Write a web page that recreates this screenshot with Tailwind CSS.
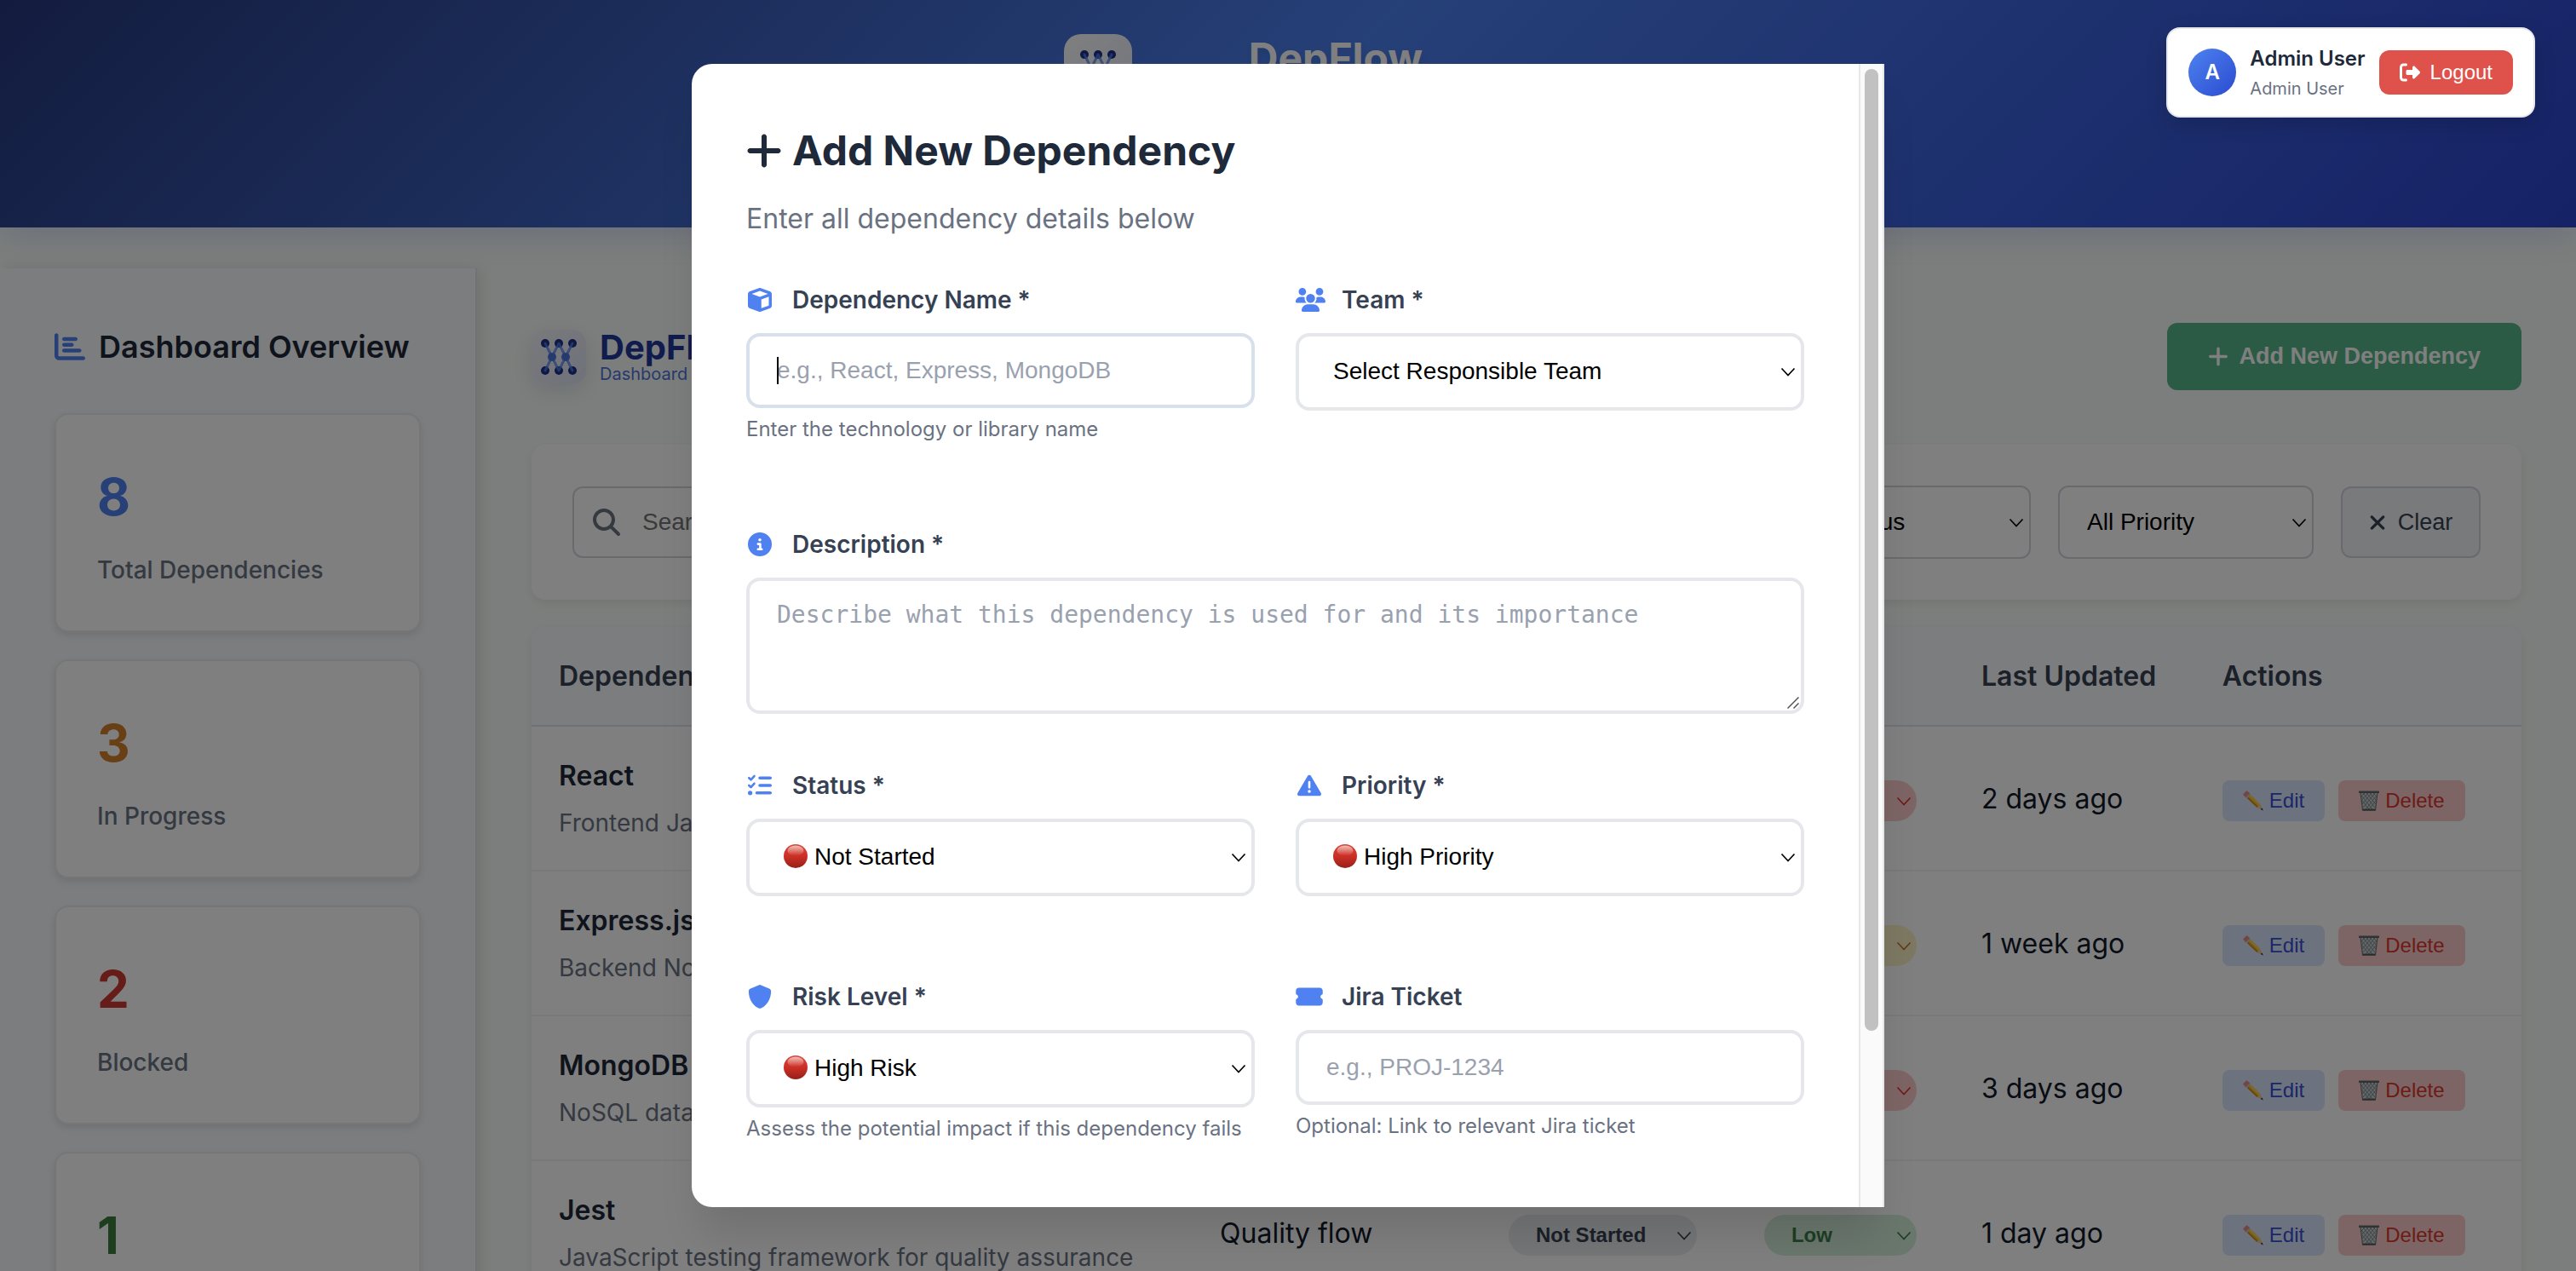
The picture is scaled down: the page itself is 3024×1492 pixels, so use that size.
<!DOCTYPE html>
<html lang="en">
<head>
<meta charset="utf-8">
<meta name="viewport" content="width=device-width, initial-scale=1">
<title>DepFlow – Add New Dependency</title>
<script src="https://cdn.jsdelivr.net/npm/@tailwindcss/browser@4"></script>
</head>
<body class="font-[Inter,sans-serif] text-[32px] leading-[51px] text-gray-900">

<!-- Shared icons -->
<svg class="absolute size-0" aria-hidden="true">
  <defs>
    <linearGradient id="ball" x1="0" y1="0" x2="0" y2="1"><stop offset="0" stop-color="#d9483c"/><stop offset=".5" stop-color="#cc2f25"/><stop offset="1" stop-color="#962019"/></linearGradient>
    <linearGradient id="shine" x1="0" y1="0" x2="0" y2="1"><stop offset="0" stop-color="#fff" stop-opacity=".65"/><stop offset="1" stop-color="#fff" stop-opacity="0"/></linearGradient>
  </defs>
  <symbol id="i-plus" viewBox="0 0 448 512"><path d="M256 80c0-17.7-14.3-32-32-32s-32 14.3-32 32V224H48c-17.7 0-32 14.3-32 32s14.3 32 32 32H192V432c0 17.7 14.3 32 32 32s32-14.3 32-32V288H400c17.7 0 32-14.3 32-32s-14.3-32-32-32H256V80z"/></symbol>
  <symbol id="i-cube" viewBox="0 0 512 512"><path d="M234.5 5.7c13.9-5 29.1-5 43.1 0l192 68.6C495 83.4 512 107.5 512 134.6V377.4c0 27-17 51.2-42.5 60.3l-192 68.6c-13.9 5-29.1 5-43.1 0l-192-68.6C17 428.6 0 404.5 0 377.4V134.6c0-27 17-51.2 42.5-60.3l192-68.6zM256 66L82.3 128 256 190l173.7-62L256 66zm32 368.6l160-57.1v-188L288 246.6v188z"/></symbol>
  <symbol id="i-users" viewBox="0 0 640 512"><path d="M144 0a80 80 0 1 1 0 160A80 80 0 1 1 144 0zM512 0a80 80 0 1 1 0 160A80 80 0 1 1 512 0zM0 298.7C0 239.8 47.8 192 106.7 192h42.7c15.9 0 31 3.5 44.6 9.7c-1.3 7.2-1.9 14.7-1.9 22.3c0 38.2 16.8 72.5 43.3 96c-.2 0-.4 0-.7 0H21.3C9.6 320 0 310.4 0 298.7zM405.3 320c-.2 0-.4 0-.7 0c26.6-23.5 43.3-57.8 43.3-96c0-7.6-.7-15-1.9-22.3c13.6-6.3 28.7-9.7 44.6-9.7h42.7C592.2 192 640 239.8 640 298.7c0 11.8-9.6 21.3-21.3 21.3H405.3zM224 224a96 96 0 1 1 192 0 96 96 0 1 1 -192 0zM128 485.3C128 411.7 187.7 352 261.3 352H378.7C452.3 352 512 411.7 512 485.3c0 14.7-11.9 26.7-26.7 26.7H154.7c-14.7 0-26.7-11.9-26.7-26.7z"/></symbol>
  <symbol id="i-info" viewBox="0 0 512 512"><path d="M256 512A256 256 0 1 0 256 0a256 256 0 1 0 0 512zM216 336h24V272H216c-13.3 0-24-10.7-24-24s10.7-24 24-24h48c13.3 0 24 10.7 24 24v88h8c13.3 0 24 10.7 24 24s-10.7 24-24 24H216c-13.3 0-24-10.7-24-24s10.7-24 24-24zm40-208a32 32 0 1 1 0 64 32 32 0 1 1 0-64z"/></symbol>
  <symbol id="i-tasks" viewBox="0 0 512 512"><path d="M152.1 38.2c9.9 8.9 10.7 24 1.8 33.9l-72 80c-4.4 4.9-10.6 7.8-17.2 7.9s-12.9-2.4-17.6-7L7 113C-2.3 103.6-2.3 88.4 7 79s24.6-9.4 33.9 0l22.1 22.1 55.1-61.2c8.9-9.9 24-10.7 33.9-1.8zm0 160c9.9 8.9 10.7 24 1.8 33.9l-72 80c-4.4 4.9-10.6 7.8-17.2 7.9s-12.9-2.4-17.6-7L7 273c-9.4-9.4-9.4-24.6 0-33.9s24.6-9.4 33.9 0l22.1 22.1 55.1-61.2c8.9-9.9 24-10.7 33.9-1.8zM224 96c0-17.7 14.3-32 32-32H480c17.7 0 32 14.3 32 32s-14.3 32-32 32H256c-17.7 0-32-14.3-32-32zm0 160c0-17.7 14.3-32 32-32H480c17.7 0 32 14.3 32 32s-14.3 32-32 32H256c-17.7 0-32-14.3-32-32zM160 416c0-17.7 14.3-32 32-32H480c17.7 0 32 14.3 32 32s-14.3 32-32 32H192c-17.7 0-32-14.3-32-32zM48 368a48 48 0 1 1 0 96 48 48 0 1 1 0-96z"/></symbol>
  <symbol id="i-warn" viewBox="0 0 512 512"><path d="M256 32c14.2 0 27.3 7.5 34.5 19.8l216 368c7.3 12.4 7.3 27.7 .2 40.1S486.3 480 472 480H40c-14.3 0-27.6-7.7-34.7-20.1s-7-27.8 .2-40.1l216-368C228.7 39.5 241.8 32 256 32zm0 128c-13.3 0-24 10.7-24 24V296c0 13.3 10.7 24 24 24s24-10.7 24-24V184c0-13.3-10.7-24-24-24zm32 224a32 32 0 1 0 -64 0 32 32 0 1 0 64 0z"/></symbol>
  <symbol id="i-shield" viewBox="0 0 512 512"><path d="M256 0c4.6 0 9.2 1 13.4 2.9L457.7 82.8c22 9.3 38.4 31 38.3 57.2c-.5 99.2-41.3 280.7-213.6 363.2c-16.7 8-36.1 8-52.8 0C57.3 420.7 16.5 239.2 16 140c-.1-26.2 16.3-47.9 38.3-57.2L242.7 2.9C246.8 1 251.4 0 256 0z"/></symbol>
  <symbol id="i-ticket" viewBox="0 0 576 512"><path d="M0 128C0 92.7 28.7 64 64 64H512c35.3 0 64 28.7 64 64v64c0 8.8-7.4 15.7-15.7 18.6C541.5 217.1 528 235 528 256s13.5 38.9 32.3 45.4c8.3 2.9 15.7 9.8 15.7 18.6v64c0 35.3-28.7 64-64 64H64c-35.3 0-64-28.7-64-64V320c0-8.8 7.4-15.7 15.7-18.6C34.5 294.9 48 277 48 256s-13.5-38.9-32.3-45.4C7.4 207.7 0 200.8 0 192V128z"/></symbol>
  <symbol id="i-chart" viewBox="0 0 512 512"><path d="M32 32c17.7 0 32 14.3 32 32V400c0 8.8 7.2 16 16 16H480c17.7 0 32 14.3 32 32s-14.3 32-32 32H80c-44.2 0-80-35.8-80-80V64C0 46.3 14.3 32 32 32zm96 96c0-17.7 14.3-32 32-32l192 0c17.7 0 32 14.3 32 32s-14.3 32-32 32H160c-17.7 0-32-14.3-32-32zm32 64H288c17.7 0 32 14.3 32 32s-14.3 32-32 32H160c-17.7 0-32-14.3-32-32s14.3-32 32-32zm0 96H416c17.7 0 32 14.3 32 32s-14.3 32-32 32H160c-17.7 0-32-14.3-32-32s14.3-32 32-32z"/></symbol>
  <symbol id="i-search" viewBox="0 0 512 512"><path d="M416 208c0 45.9-14.9 88.3-40 122.7L502.6 457.4c12.5 12.5 12.5 32.8 0 45.3s-32.8 12.5-45.3 0L330.7 376c-34.4 25.2-76.8 40-122.7 40C93.1 416 0 322.9 0 208S93.1 0 208 0S416 93.1 416 208zM208 352a144 144 0 1 0 0-288 144 144 0 1 0 0 288z"/></symbol>
  <symbol id="i-logout" viewBox="0 0 512 512"><path d="M377.9 105.9L500.7 228.7c7.2 7.2 11.3 17.1 11.3 27.3s-4.1 20.1-11.3 27.3L377.9 406.1c-6.4 6.4-15 9.9-24 9.9c-18.7 0-33.9-15.2-33.9-33.9l0-62.1-128 0c-17.7 0-32-14.3-32-32l0-64c0-17.7 14.3-32 32-32l128 0 0-62.1c0-18.7 15.2-33.9 33.9-33.9c9 0 17.6 3.6 24 9.9zM160 96L96 96c-17.7 0-32 14.3-32 32l0 256c0 17.7 14.3 32 32 32l64 0c17.7 0 32 14.3 32 32s-14.3 32-32 32l-64 0c-53 0-96-43-96-96L0 128C0 75 43 32 96 32l64 0c17.7 0 32 14.3 32 32s-14.3 32-32 32z"/></symbol>
  <symbol id="i-x" viewBox="0 0 384 512"><path d="M342.6 150.6c12.5-12.5 12.5-32.8 0-45.3s-32.8-12.5-45.3 0L192 210.7 86.6 105.4c-12.5-12.5-32.8-12.5-45.3 0s-12.5 32.8 0 45.3L146.7 256 41.4 361.4c-12.5 12.5-12.5 32.8 0 45.3s32.8 12.5 45.3 0L192 301.3 297.4 406.6c12.5 12.5 32.8 12.5 45.3 0s12.5-32.8 0-45.3L237.3 256 342.6 150.6z"/></symbol>
  <symbol id="i-chevron" viewBox="0 0 18 12"><path d="M1.5 1.5 9 9.5 16.5 1.5" fill="none" stroke="currentColor" stroke-width="1.7"/></symbol>
  <symbol id="i-ball" viewBox="0 0 28 28"><circle cx="14" cy="14" r="14" fill="url(#ball)"/><ellipse cx="14" cy="7.5" rx="9.5" ry="6" fill="url(#shine)"/></symbol>
  <symbol id="i-pencil" viewBox="0 0 24 24">
    <path d="M1 4.5 4.5 1 7.5 3.5 3.5 7.5Z" fill="#e98a86" stroke="#e98a86" stroke-width="1.5" stroke-linejoin="round"/>
    <path d="M3.5 7.5 7.5 3.5 9 5 5 9Z" fill="#b9c6cf"/>
    <path d="M5 9 9 5 20.5 16 16.5 20Z" fill="#f0b429"/><path d="M7.3 6.7 9 5 20.5 16 18.8 17.7Z" fill="#fbd35c"/><path d="M5 9 6 8 17.5 19 16.5 20Z" fill="#c98712"/>
    <path d="M16.5 20 20.5 16 23.5 23.2Z" fill="#ecc79c"/><path d="M20.8 21.9 22.4 20.5 23.8 23.6Z" fill="#222"/>
  </symbol>
  <symbol id="i-bin" viewBox="0 0 24 24">
    <path d="M2 2 4.5 23H19.5L22 2Z" fill="#c9ced0"/>
    <path d="M5 3 19 20M9 3 20 16M13 3 21 12M17 3 21 7M3 6 16 22M4 12 12 22M19 3 5 20M15 3 4 16M11 3 3 12M7 3 3 7M21 6 8 22M20 12 12 22" stroke="#7b8386" stroke-width=".9" fill="none"/>
    <path d="M2 2 4.5 23H19.5L22 2Z" fill="none" stroke="#6f777a" stroke-width="1.2"/>
    <path d="M.8 1.8H23.2" stroke="#5f676a" stroke-width="2.4" stroke-linecap="round"/><path d="M4.5 22.6H19.5" stroke="#50585b" stroke-width="2"/>
  </symbol>
  <symbol id="i-graph" viewBox="0 0 64 64">
    <g fill="#1f2f86"><circle cx="16" cy="16" r="5"/><circle cx="32" cy="16" r="5"/><circle cx="48" cy="16" r="5"/><circle cx="16" cy="48" r="5"/><circle cx="32" cy="48" r="5"/><circle cx="48" cy="48" r="5"/></g>
    <path d="M16 16 24 32 32 16 40 32 48 16M16 48 24 32 32 48 40 32 48 48" fill="none" stroke="#4f82f0" stroke-opacity=".75" stroke-width="3" stroke-linecap="round" stroke-linejoin="round"/>
    <g fill="#4a76dc"><circle cx="24" cy="32" r="5"/><circle cx="40" cy="32" r="5"/></g>
  </symbol>
</svg>

<div class="relative h-screen overflow-hidden bg-[#f9fdfa]">

  <header class="h-[267px] bg-[linear-gradient(135deg,#27387e,#4c80f0_50%,#2c44cc)] pt-10 shadow-[0_8px_40px_rgba(59,90,220,0.2)]">
    <div class="flex items-start justify-center gap-8">
      <div class="grid size-20 place-items-center rounded-[20px] bg-[linear-gradient(135deg,#ffffff,#e6ecfc)]"><svg class="size-16"><use href="#i-graph"/></svg></div>
      <div class="w-[414px] text-center">
        <h1 class="text-5xl leading-[56px] font-bold text-white [text-shadow:0_4px_8px_rgba(0,0,0,0.1)]">DepFlow</h1>
      </div>
    </div>
  </header>

  <div class="mt-12 flex items-stretch">
    <aside class="w-[560px] shrink-0 border-r-2 border-[#e2e5ea] bg-[#f8fafc] px-16 pt-16 pb-16 shadow-[4px_0_16px_rgba(0,0,0,0.1)]">
      <h2 class="mb-[50px] flex h-14 items-center gap-4 text-4xl font-semibold whitespace-nowrap text-gray-800"><svg class="size-9 shrink-0 fill-[#4f82f0]"><use href="#i-chart"/></svg>Dashboard Overview</h2>
      <div class="flex flex-col gap-8">
        <div class="rounded-2xl border-2 border-[#ececec] bg-white p-12 shadow-[0_4px_8px_rgba(0,0,0,0.1)]">
          <div class="mb-4 text-6xl leading-24 font-bold text-[#4f82f0]">8</div>
          <div class="text-[28px] leading-[45px] font-medium text-gray-500">Total Dependencies</div>
        </div>
        <div class="rounded-2xl border-2 border-[#ececec] bg-white p-12 shadow-[0_4px_8px_rgba(0,0,0,0.1)]">
          <div class="mb-4 text-6xl leading-24 font-bold text-[#d37e2d]">3</div>
          <div class="text-[28px] leading-[45px] font-medium text-gray-500">In Progress</div>
        </div>
        <div class="rounded-2xl border-2 border-[#ececec] bg-white p-12 shadow-[0_4px_8px_rgba(0,0,0,0.1)]">
          <div class="mb-4 text-6xl leading-24 font-bold text-[#cc3832]">2</div>
          <div class="text-[28px] leading-[45px] font-medium text-gray-500">Blocked</div>
        </div>
        <div class="rounded-2xl border-2 border-[#ececec] bg-white p-12 shadow-[0_4px_8px_rgba(0,0,0,0.1)]">
          <div class="mb-4 text-6xl leading-24 font-bold text-[#3c7d40]">1</div>
          <div class="text-[28px] leading-[45px] font-medium text-gray-500">Completed</div>
        </div>
      </div>
    </aside>

    <main class="min-w-0 flex-1 p-16">
      <div class="mb-16 flex items-center justify-between">
        <div class="flex items-center gap-4">
          <div class="size-16 rounded-2xl bg-[linear-gradient(135deg,#f3f4f8,#dfe4f6)] shadow-[0_8px_24px_rgba(70,80,130,0.15)]"><svg class="size-16"><use href="#i-graph"/></svg></div>
          <div>
            <div class="text-[40px] leading-10 font-bold text-[#22389c]">DepFlow</div>
            <div class="text-xl leading-[22px] text-[#4f74d8]">Dashboard</div>
          </div>
        </div>
        <button class="flex h-[79px] items-center gap-3 rounded-xl bg-[#56b688] px-12 font-['Liberation_Sans',Arial,sans-serif] text-[27px] font-bold text-white"><svg class="h-[27px] w-6 fill-current"><use href="#i-plus"/></svg>Add New Dependency</button>
      </div>

      <div class="mb-8 flex items-center gap-8 rounded-2xl bg-white p-12 font-['Liberation_Sans',Arial,sans-serif] text-[28px] leading-8 shadow-[0_4px_12px_rgba(0,0,0,0.08)]">
        <div class="relative flex-1">
          <svg class="absolute top-[26px] left-6 size-8 fill-[#6b7280]"><use href="#i-search"/></svg>
          <input type="search" aria-label="Search dependencies" placeholder="Search dependencies..." class="h-[84px] w-full rounded-xl border-2 border-gray-300 bg-white pr-6 pl-20 placeholder:text-[#757575]">
        </div>
        <div class="relative w-[300px]">
          <select aria-label="Team filter" class="h-[86px] w-full appearance-none rounded-xl border-2 border-gray-300 bg-white pl-8 text-black"><option>All Teams</option></select>
          <svg class="pointer-events-none absolute top-[38px] right-2 h-3 w-[18px] text-black"><use href="#i-chevron"/></svg>
        </div>
        <div class="relative w-[300px]">
          <select aria-label="Status filter" class="h-[86px] w-full appearance-none rounded-xl border-2 border-gray-300 bg-white pl-8 text-black"><option>All Status</option></select>
          <svg class="pointer-events-none absolute top-[38px] right-2 h-3 w-[18px] text-black"><use href="#i-chevron"/></svg>
        </div>
        <div class="relative w-[300px]">
          <select aria-label="Priority filter" class="h-[86px] w-full appearance-none rounded-xl border-2 border-gray-300 bg-white pl-8 text-black"><option>All Priority</option></select>
          <svg class="pointer-events-none absolute top-[38px] right-2 h-3 w-[18px] text-black"><use href="#i-chevron"/></svg>
        </div>
        <button class="flex h-[84px] w-[164px] items-center justify-center gap-3.5 rounded-xl border-2 border-gray-300 bg-gray-100 text-[27px] text-gray-700"><svg class="h-[27px] w-5 fill-current"><use href="#i-x"/></svg>Clear</button>
      </div>

      <div class="overflow-hidden rounded-2xl bg-white shadow-[0_4px_12px_rgba(0,0,0,0.08)]">
        <table class="w-full table-fixed border-collapse text-left whitespace-nowrap">
          <colgroup><col class="w-[33.22%]"><col class="w-[14.51%]"><col class="w-[12.84%]"><col class="w-[10.92%]"><col class="w-[12.11%]"><col></colgroup>
          <thead>
            <tr class="border-b-2 border-[#dfe2e8] bg-[#f8fafc] text-gray-700">
              <th class="p-8 font-semibold">Dependency</th><th class="p-8 font-semibold">Team</th><th class="p-8 font-semibold">Status</th><th class="p-8 font-semibold">Priority</th><th class="p-8 font-semibold">Last Updated</th><th class="p-8 font-semibold">Actions</th>
            </tr>
          </thead>
          <tbody>
            <tr class="border-b-2 border-[#f1f2f4]">
              <td class="px-8 py-8"><div class="mb-2 font-semibold text-gray-800">React</div><div class="text-[28px] leading-[45px] text-gray-500">Frontend JavaScript library</div></td>
              <td class="px-8">Frontend</td>
              <td class="px-8"><div class="relative mt-1.5 w-[221px] font-['Liberation_Sans',Arial,sans-serif] text-2xl font-bold text-gray-700"><select aria-label="React status" class="h-12 w-full appearance-none rounded-full bg-[#eaecf0] pl-8"><option>Not Started</option></select><svg class="pointer-events-none absolute top-[19px] right-1.5 h-3 w-[18px]"><use href="#i-chevron"/></svg></div></td>
              <td class="px-8"><div class="relative mt-1.5 w-[179px] font-['Liberation_Sans',Arial,sans-serif] text-2xl font-bold text-[#d9372f]"><select aria-label="React priority" class="h-12 w-full appearance-none rounded-full bg-[#fbcaca] pl-8"><option>High</option></select><svg class="pointer-events-none absolute top-[19px] right-1.5 h-3 w-[18px]"><use href="#i-chevron"/></svg></div></td>
              <td class="px-8">2 days ago</td>
              <td class="px-8"><div class="mt-1.5 flex gap-4 font-['Liberation_Sans',Arial,sans-serif] text-2xl"><button class="flex h-12 items-center gap-[7px] rounded-lg bg-[#dbe7fd] px-6 text-[#344fd4]"><svg class="size-6"><use href="#i-pencil"/></svg>Edit</button><button class="flex h-12 items-center gap-[7px] rounded-lg bg-[#fbcaca] px-6 text-[#d9372f]"><svg class="size-6"><use href="#i-bin"/></svg>Delete</button></div></td>
            </tr>
            <tr class="border-b-2 border-[#f1f2f4]">
              <td class="px-8 py-8"><div class="mb-2 font-semibold text-gray-800">Express.js</div><div class="text-[28px] leading-[45px] text-gray-500">Backend Node.js framework</div></td>
              <td class="px-8">Backend</td>
              <td class="px-8"><div class="relative mt-1.5 w-[221px] font-['Liberation_Sans',Arial,sans-serif] text-2xl font-bold text-gray-700"><select aria-label="Express.js status" class="h-12 w-full appearance-none rounded-full bg-[#eaecf0] pl-8"><option>Not Started</option></select><svg class="pointer-events-none absolute top-[19px] right-1.5 h-3 w-[18px]"><use href="#i-chevron"/></svg></div></td>
              <td class="px-8"><div class="relative mt-1.5 w-[179px] font-['Liberation_Sans',Arial,sans-serif] text-2xl font-bold text-[#cb742b]"><select aria-label="Express.js priority" class="h-12 w-full appearance-none rounded-full bg-[#fbf0c4] pl-8"><option>Medium</option></select><svg class="pointer-events-none absolute top-[19px] right-1.5 h-3 w-[18px]"><use href="#i-chevron"/></svg></div></td>
              <td class="px-8">1 week ago</td>
              <td class="px-8"><div class="mt-1.5 flex gap-4 font-['Liberation_Sans',Arial,sans-serif] text-2xl"><button class="flex h-12 items-center gap-[7px] rounded-lg bg-[#dbe7fd] px-6 text-[#344fd4]"><svg class="size-6"><use href="#i-pencil"/></svg>Edit</button><button class="flex h-12 items-center gap-[7px] rounded-lg bg-[#fbcaca] px-6 text-[#d9372f]"><svg class="size-6"><use href="#i-bin"/></svg>Delete</button></div></td>
            </tr>
            <tr class="border-b-2 border-[#f1f2f4]">
              <td class="px-8 py-8"><div class="mb-2 font-semibold text-gray-800">MongoDB</div><div class="text-[28px] leading-[45px] text-gray-500">NoSQL database</div></td>
              <td class="px-8">Backend</td>
              <td class="px-8"><div class="relative mt-1.5 w-[221px] font-['Liberation_Sans',Arial,sans-serif] text-2xl font-bold text-gray-700"><select aria-label="MongoDB status" class="h-12 w-full appearance-none rounded-full bg-[#eaecf0] pl-8"><option>Not Started</option></select><svg class="pointer-events-none absolute top-[19px] right-1.5 h-3 w-[18px]"><use href="#i-chevron"/></svg></div></td>
              <td class="px-8"><div class="relative mt-1.5 w-[179px] font-['Liberation_Sans',Arial,sans-serif] text-2xl font-bold text-[#d9372f]"><select aria-label="MongoDB priority" class="h-12 w-full appearance-none rounded-full bg-[#fbcaca] pl-8"><option>High</option></select><svg class="pointer-events-none absolute top-[19px] right-1.5 h-3 w-[18px]"><use href="#i-chevron"/></svg></div></td>
              <td class="px-8">3 days ago</td>
              <td class="px-8"><div class="mt-1.5 flex gap-4 font-['Liberation_Sans',Arial,sans-serif] text-2xl"><button class="flex h-12 items-center gap-[7px] rounded-lg bg-[#dbe7fd] px-6 text-[#344fd4]"><svg class="size-6"><use href="#i-pencil"/></svg>Edit</button><button class="flex h-12 items-center gap-[7px] rounded-lg bg-[#fbcaca] px-6 text-[#d9372f]"><svg class="size-6"><use href="#i-bin"/></svg>Delete</button></div></td>
            </tr>
            <tr class="border-b-2 border-[#f1f2f4]">
              <td class="px-8 py-8"><div class="mb-2 font-semibold text-gray-800">Jest</div><div class="text-[28px] leading-[45px] text-gray-500">JavaScript testing framework for quality assurance</div></td>
              <td class="px-8">Quality flow</td>
              <td class="px-8"><div class="relative mt-1.5 w-[221px] font-['Liberation_Sans',Arial,sans-serif] text-2xl font-bold text-gray-700"><select aria-label="Jest status" class="h-12 w-full appearance-none rounded-full bg-[#eaecf0] pl-8"><option>Not Started</option></select><svg class="pointer-events-none absolute top-[19px] right-1.5 h-3 w-[18px]"><use href="#i-chevron"/></svg></div></td>
              <td class="px-8"><div class="relative mt-1.5 w-[179px] font-['Liberation_Sans',Arial,sans-serif] text-2xl font-bold text-[#3c7d48]"><select aria-label="Jest priority" class="h-12 w-full appearance-none rounded-full bg-[#d4eedb] pl-8"><option>Low</option></select><svg class="pointer-events-none absolute top-[19px] right-1.5 h-3 w-[18px]"><use href="#i-chevron"/></svg></div></td>
              <td class="px-8">1 day ago</td>
              <td class="px-8"><div class="mt-1.5 flex gap-4 font-['Liberation_Sans',Arial,sans-serif] text-2xl"><button class="flex h-12 items-center gap-[7px] rounded-lg bg-[#dbe7fd] px-6 text-[#344fd4]"><svg class="size-6"><use href="#i-pencil"/></svg>Edit</button><button class="flex h-12 items-center gap-[7px] rounded-lg bg-[#fbcaca] px-6 text-[#d9372f]"><svg class="size-6"><use href="#i-bin"/></svg>Delete</button></div></td>
            </tr>
          </tbody>
        </table>
      </div>
    </main>
  </div>

  <!-- Modal -->
  <div class="absolute inset-0 z-10 flex items-center justify-center bg-black/50">
    <div role="dialog" aria-modal="true" aria-labelledby="modal-title" class="flex h-[90vh] w-[1400px] overflow-hidden rounded-l-3xl bg-white shadow-[0_40px_50px_-10px_rgba(0,0,0,0.12)]">
      <div class="min-w-0 flex-1 p-16">
        <h2 id="modal-title" class="mb-4 flex items-center gap-3 text-5xl leading-[76px] font-bold text-gray-800"><svg class="h-12 w-[42px] fill-current"><use href="#i-plus"/></svg>Add New Dependency</h2>
        <p class="mb-12 text-gray-500">Enter all dependency details below</p>
        <form>
          <div class="mb-24 grid grid-cols-2 items-start gap-12">
            <div>
              <label for="dep-name" class="mb-4 flex items-center gap-[22px] text-[28px] leading-[45px] font-semibold text-gray-700"><svg class="h-7 w-8 fill-[#4f82f0]"><use href="#i-cube"/></svg>Dependency Name *</label>
              <div class="relative">
                <input id="dep-name" type="text" placeholder="e.g., React, Express, MongoDB" class="block h-[88px] w-full rounded-2xl border-4 border-[#d8e0ec] bg-white px-8 font-['Liberation_Sans',Arial,sans-serif] text-[28px] leading-8 placeholder:text-gray-400">
                <div class="absolute top-7 left-9 h-8 w-0.5 bg-black"></div>
              </div>
              <p class="mt-2 text-2xl leading-[34px] text-gray-500">Enter the technology or library name</p>
            </div>
            <div>
              <label for="dep-team" class="mb-4 flex items-center gap-[22px] text-[28px] leading-[45px] font-semibold text-gray-700"><svg class="h-7 w-8 overflow-visible fill-[#4f82f0]"><use href="#i-users" width="35" height="28"/></svg>Team *</label>
              <div class="relative">
                <select id="dep-team" class="block h-[91px] w-full appearance-none rounded-2xl border-4 border-gray-200 bg-white pl-10 font-['Liberation_Sans',Arial,sans-serif] text-[28px] leading-8 text-black"><option>Select Responsible Team</option></select>
                <svg class="pointer-events-none absolute top-10 right-2.5 h-3 w-[18px] text-black"><use href="#i-chevron"/></svg>
              </div>
            </div>
          </div>

          <div class="mb-[62px]">
            <label for="dep-desc" class="mb-4 flex items-center gap-[22px] text-[28px] leading-[45px] font-semibold text-gray-700"><svg class="h-7 w-8 fill-[#4f82f0]"><use href="#i-info"/></svg>Description *</label>
            <div class="relative">
              <textarea id="dep-desc" placeholder="Describe what this dependency is used for and its importance" class="block h-40 w-full resize-none rounded-2xl border-4 border-gray-200 bg-white px-8 py-6 font-['DejaVu_Sans_Mono',monospace] text-[28px] leading-8 placeholder:text-gray-400"></textarea>
              <svg class="absolute right-1.5 bottom-1.5 size-3.5 stroke-[#555]" viewBox="0 0 14 14" fill="none" stroke-width="1.5"><path d="M.5 13.5 13.5.5M7.5 13.5l6-6"/></svg>
            </div>
          </div>

          <div class="mb-24 grid grid-cols-2 items-start gap-12">
            <div>
              <label for="dep-status" class="mb-4 flex items-center gap-[22px] text-[28px] leading-[45px] font-semibold text-gray-700"><svg class="h-7 w-8 fill-[#4f82f0]"><use href="#i-tasks"/></svg>Status *</label>
              <div class="relative">
                <select id="dep-status" class="block h-[91px] w-full appearance-none rounded-2xl border-4 border-gray-200 bg-white pl-[76px] font-['Liberation_Sans',Arial,sans-serif] text-[28px] leading-8 text-black"><option>Not Started</option></select>
                <svg class="pointer-events-none absolute top-[30px] left-11 size-7"><use href="#i-ball"/></svg>
                <svg class="pointer-events-none absolute top-10 right-2.5 h-3 w-[18px] text-black"><use href="#i-chevron"/></svg>
              </div>
            </div>
            <div>
              <label for="dep-priority" class="mb-4 flex items-center gap-[22px] text-[28px] leading-[45px] font-semibold text-gray-700"><svg class="h-7 w-8 fill-[#4f82f0]"><use href="#i-warn"/></svg>Priority *</label>
              <div class="relative">
                <select id="dep-priority" class="block h-[91px] w-full appearance-none rounded-2xl border-4 border-gray-200 bg-white pl-[76px] font-['Liberation_Sans',Arial,sans-serif] text-[28px] leading-8 text-black"><option>High Priority</option></select>
                <svg class="pointer-events-none absolute top-[30px] left-11 size-7"><use href="#i-ball"/></svg>
                <svg class="pointer-events-none absolute top-10 right-2.5 h-3 w-[18px] text-black"><use href="#i-chevron"/></svg>
              </div>
            </div>
          </div>

          <div class="grid grid-cols-2 items-start gap-12">
            <div>
              <label for="dep-risk" class="mb-4 flex items-center gap-[22px] text-[28px] leading-[45px] font-semibold text-gray-700"><svg class="h-7 w-8 fill-[#4f82f0]"><use href="#i-shield"/></svg>Risk Level *</label>
              <div class="relative">
                <select id="dep-risk" class="block h-[91px] w-full appearance-none rounded-2xl border-4 border-gray-200 bg-white pl-[76px] font-['Liberation_Sans',Arial,sans-serif] text-[28px] leading-8 text-black"><option>High Risk</option></select>
                <svg class="pointer-events-none absolute top-[30px] left-11 size-7"><use href="#i-ball"/></svg>
                <svg class="pointer-events-none absolute top-10 right-2.5 h-3 w-[18px] text-black"><use href="#i-chevron"/></svg>
              </div>
              <p class="mt-2 text-2xl leading-[34px] text-gray-500">Assess the potential impact if this dependency fails</p>
            </div>
            <div>
              <label for="dep-jira" class="mb-4 flex items-center gap-[22px] text-[28px] leading-[45px] font-semibold text-gray-700"><svg class="h-7 w-8 fill-[#4f82f0]"><use href="#i-ticket"/></svg>Jira Ticket</label>
              <input id="dep-jira" type="text" placeholder="e.g., PROJ-1234" class="block h-[88px] w-full rounded-2xl border-4 border-gray-200 bg-white px-8 font-['Liberation_Sans',Arial,sans-serif] text-[28px] leading-8 placeholder:text-gray-400">
              <p class="mt-2 text-2xl leading-[34px] text-gray-500">Optional: Link to relevant Jira ticket</p>
            </div>
          </div>
        </form>
      </div>
      <!-- Scroll track -->
      <div class="w-[30px] shrink-0 border-r-2 border-l-2 border-[#e8e8e8] bg-[#fafafa] px-[5px] pt-1.5" aria-hidden="true"><div class="h-[84.5%] rounded-full bg-[#c1c1c1]"></div></div>
    </div>
  </div>

  <!-- Signed-in user -->
  <div class="absolute top-8 right-12 z-20 flex h-[106px] items-center gap-4 rounded-2xl border-2 border-gray-200 bg-white px-6 shadow-[0_8px_24px_rgba(0,0,0,0.15)]">
    <div class="grid size-14 place-items-center rounded-full bg-[linear-gradient(135deg,#4f82f0,#2a4bd0)] text-2xl leading-none font-semibold text-white">A</div>
    <div class="whitespace-nowrap">
      <div class="text-2xl leading-[38px] font-semibold text-gray-800">Admin User</div>
      <div class="text-xl leading-8 text-gray-500">Admin User</div>
    </div>
    <button class="flex h-[52px] items-center gap-3 rounded-xl bg-[#df524b] px-6 font-['Liberation_Sans',Arial,sans-serif] text-2xl text-white"><svg class="size-6 fill-current"><use href="#i-logout"/></svg>Logout</button>
  </div>
</div>
</body>
</html>
